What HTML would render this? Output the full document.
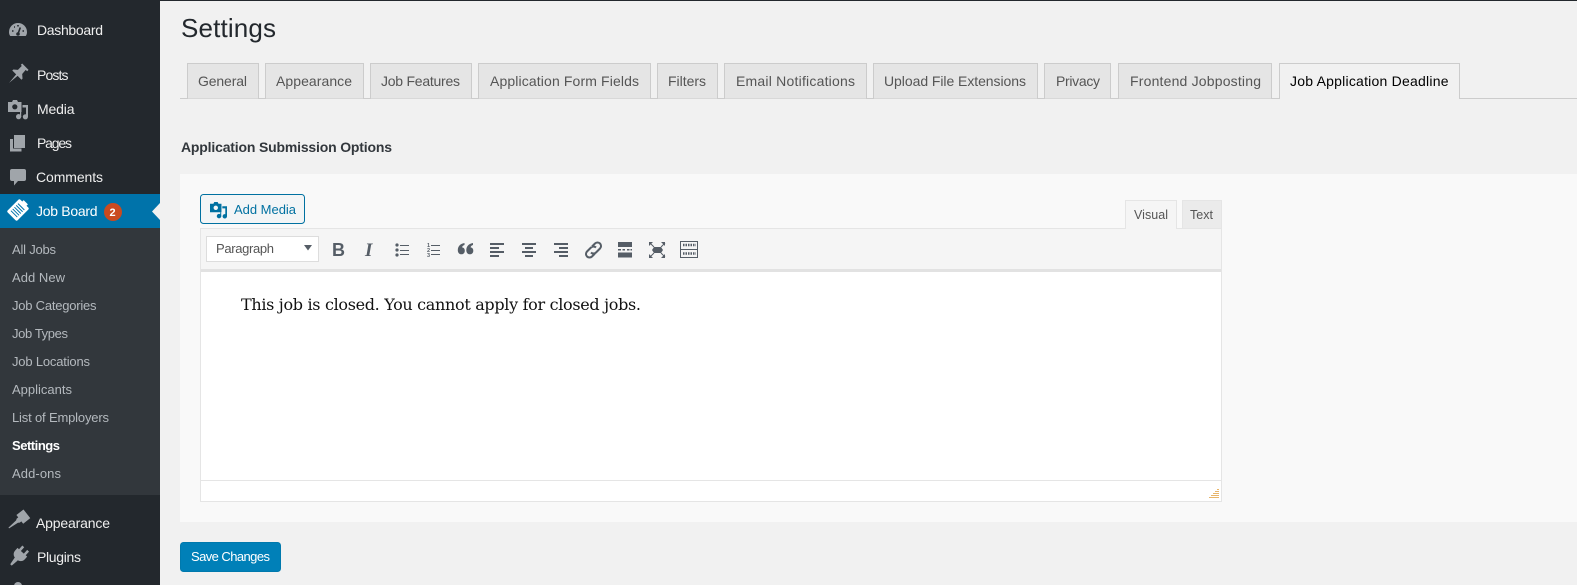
<!DOCTYPE html>
<html><head><meta charset="utf-8"><title>Settings</title>
<style>
html,body{margin:0;padding:0;background:#f1f1f1;overflow:hidden}
svg{display:block}
text{font-family:"Liberation Sans",Arial,sans-serif;font-size:13px}
.m{fill:#eee;font-size:14px}
.s{fill:#b4b9be}
.i{fill:#a0a5aa}
.t{fill:#555;font-size:14px;font-weight:400}
.b{fill:#555d66}
.l{stroke:#555d66;stroke-width:2;fill:none}
.l1{stroke:#555d66;stroke-width:1;fill:none}
</style></head><body>
<svg width="1577" height="585" viewBox="0 0 1577 585" xmlns="http://www.w3.org/2000/svg">
<defs>
<g id="media"><path d="M0 2h4l1-2h4l1 2h3.500v10H0z"/><circle cx="6.800" cy="6.800" r="2.600" fill="var(--c)"/><path d="M14.500 5H20v12h-2V7.500h-3.500zM12 12h1.200v5H12z"/><circle cx="17.400" cy="16.800" r="2.600"/><circle cx="10.600" cy="16.600" r="2.600"/></g>
</defs>
<rect width="1577" height="585" fill="#f1f1f1"/>
<rect width="1577" height="1" fill="#23282d"/>
<!-- sidebar -->
<rect width="160" height="585" fill="#23282d"/>
<rect y="228" width="160" height="267" fill="#32373c"/>
<rect y="194" width="160" height="34" fill="#0073aa"/>
<path d="M160 203l-8 8.500 8 8.500z" fill="#f1f1f1"/>
<!-- sidebar icons -->
<path class="i" d="M18 23a9 9 0 0 0-9 9c0 1.800.5 3.200 1.300 4h15.400c.8-.8 1.300-2.200 1.300-4a9 9 0 0 0-9-9z"/>
<path d="M18 34l2.300-6.500M12 31h1.500M14 27h1M18 25v1.500M22.500 31h1.500" stroke="#23282d" stroke-width="1.600" fill="none"/>
<circle cx="18" cy="34" r="1.800" fill="#23282d"/>
<g transform="translate(19 73) rotate(45)"><path class="i" d="M-4.500-9h9v2H2.500l.5 5.500 3.500 3V3h-13V1.500l3.500-3L-3-7h-1.500zM-1 3h2L0 14z"/></g>
<g class="i" transform="translate(8 100)" style="--c:#23282d"><use href="#media"/></g>
<path class="i" d="M10 139h3v9.500h8.500v3H10zM14 135h11v13H14z"/>
<path class="i" d="M12 169h12a2 2 0 0 1 2 2v8a2 2 0 0 1-2 2h-6l-4 4.500V181h-2a2 2 0 0 1-2-2v-8a2 2 0 0 1 2-2z"/>
<g transform="translate(18 210) rotate(45)"><rect x="-7" y="-9" width="14" height="18" rx="1.500" fill="#fff"/><rect x="-3" y="-11" width="6" height="3" fill="#fff"/><path d="M-4.500-4.500h9M-4.500-2h9M-4.500.5h9M-4.500 3h9M-4.500 5.500h9" stroke="#0073aa" stroke-width="1"/></g>
<circle cx="113" cy="212" r="9" fill="#ca4a1f"/>
<text x="109.500" y="216" fill="#fff" style="font-size:11px;font-weight:700">2</text>
<g transform="translate(19 520) rotate(52)"><path class="i" d="M-5.500-10h11v9h-3v2l-1 1.500L.5 13h-1L-1.500 2.500l-1-1.500v-2h-3zM-5.500-.500z"/></g>
<g transform="translate(19 556) rotate(42)"><path class="i" d="M-4.500-10h2.500v5h4v-5h2.500v5h2v3.500c0 3-2 5-4.500 5.500V5l-1 7h-2l-1-7V4c-2.500-.5-4.500-2.500-4.500-5.500V-5h2z"/></g>
<circle cx="18" cy="586" r="4" class="i"/>
<!-- sidebar labels -->
<text class="m" x="37" y="35" textLength="66">Dashboard</text>
<text class="m" x="37" y="80" textLength="31.500">Posts</text>
<text class="m" x="37" y="114" textLength="37.500">Media</text>
<text class="m" x="37" y="148" textLength="35">Pages</text>
<text class="m" x="36" y="182" textLength="67">Comments</text>
<text x="36" y="216" textLength="61.500" fill="#fff" style="font-size:14px">Job Board</text>
<text class="m" x="36" y="528" textLength="74">Appearance</text>
<text class="m" x="37" y="562" textLength="44">Plugins</text>
<text class="s" x="12" y="254" textLength="44">All Jobs</text>
<text class="s" x="12" y="282" textLength="53">Add New</text>
<text class="s" x="12" y="310" textLength="84.500">Job Categories</text>
<text class="s" x="12" y="338" textLength="56">Job Types</text>
<text class="s" x="12" y="366" textLength="78">Job Locations</text>
<text class="s" x="12" y="394" textLength="60">Applicants</text>
<text class="s" x="12" y="422" textLength="97">List of Employers</text>
<text x="12" y="450" textLength="48" fill="#fff" style="font-weight:700">Settings</text>
<text class="s" x="12" y="478" textLength="49">Add-ons</text>
<!-- heading -->
<text x="181" y="37" textLength="95" fill="#23282d" style="font-size:26px">Settings</text>
<!-- tabs -->
<rect x="180" y="98" width="1397" height="1" fill="#ccc"/>
<g fill="#e5e5e5" stroke="#ccc">
<path d="M187.500 98.500v-35h71v35"/><path d="M265.500 98.500v-35h98v35"/><path d="M370.500 98.500v-35h101v35"/><path d="M478.500 98.500v-35h172v35"/><path d="M657.500 98.500v-35h60v35"/><path d="M724.500 98.500v-35h142v35"/><path d="M873.500 98.500v-35h164v35"/><path d="M1044.500 98.500v-35h66v35"/><path d="M1118.500 98.500v-35h153v35"/>
</g>
<path d="M1279.500 99v-35.500h180V99" fill="#f1f1f1" stroke="#ccc"/>
<rect x="1280" y="98" width="179" height="1" fill="#f1f1f1"/>
<text class="t" x="198" y="86" textLength="49">General</text>
<text class="t" x="276" y="86" textLength="76">Appearance</text>
<text class="t" x="381" y="86" textLength="79">Job Features</text>
<text class="t" x="490" y="86" textLength="149">Application Form Fields</text>
<text class="t" x="668" y="86" textLength="38">Filters</text>
<text class="t" x="736" y="86" textLength="119">Email Notifications</text>
<text class="t" x="884" y="86" textLength="142">Upload File Extensions</text>
<text class="t" x="1056" y="86" textLength="44">Privacy</text>
<text class="t" x="1130" y="86" textLength="131">Frontend Jobposting</text>
<text x="1290" y="86" textLength="158.500" fill="#000" style="font-size:14px">Job Application Deadline</text>
<text x="181" y="152" textLength="211" fill="#32373c" style="font-size:14px;font-weight:700">Application Submission Options</text>
<!-- panel -->
<rect x="180" y="174" width="1397" height="348" fill="#f9f9f9"/>
<!-- add media -->
<rect x="200.500" y="194.500" width="104" height="29" rx="3" fill="#f3f5f6" stroke="#0071a1"/>
<g fill="#0071a1" transform="translate(210 202) scale(.85)" style="--c:#f3f5f6"><use href="#media"/></g>
<text x="234" y="214" textLength="62" fill="#0071a1">Add Media</text>
<!-- editor tabs -->
<path d="M1125.500 228.500v-28h51v28" fill="#f5f5f5" stroke="#e5e5e5"/>
<path d="M1182.500 228.500v-28h39v28" fill="#ebebeb" stroke="#e5e5e5"/>
<text x="1134" y="219" textLength="34" fill="#555" style="font-size:12.500px">Visual</text>
<text x="1190" y="219" textLength="23" fill="#555" style="font-size:12.500px">Text</text>
<!-- editor -->
<rect x="200.500" y="228.500" width="1021" height="273" fill="#fff" stroke="#e5e5e5"/>
<rect x="201" y="229" width="1020" height="41" fill="#f5f5f5"/>
<rect x="201" y="269" width="1020" height="3" fill="#e2e2e2"/>
<rect x="1126" y="228" width="50" height="1" fill="#f5f5f5"/>
<rect x="201" y="480" width="1020" height="1" fill="#e5e5e5"/>
<!-- toolbar -->
<rect x="206.500" y="236.500" width="112" height="25" fill="#fff" stroke="#ddd"/>
<text x="216" y="253" textLength="58" fill="#555">Paragraph</text>
<path d="M304 245h8l-4 5.500z" fill="#555d66"/>
<text class="b" x="332" y="256" style="font-size:18px;font-weight:700">B</text>
<text class="b" x="365" y="256" style="font-family:'Liberation Serif',serif;font-size:19px;font-weight:700;font-style:italic">I</text>
<g class="b"><circle cx="397" cy="245" r="1.600"/><circle cx="397" cy="250" r="1.600"/><circle cx="397" cy="255" r="1.600"/></g>
<path class="l1" d="M400 245.500h9M400 250.500h9M400 254.500h9"/>
<text x="427" y="247" class="b" style="font-size:5.500px;font-weight:700">1</text><text x="427" y="252" class="b" style="font-size:5.500px;font-weight:700">2</text><text x="427" y="257" class="b" style="font-size:5.500px;font-weight:700">3</text>
<path class="l1" d="M431 245.500h9M431 250.500h9M431 254.500h9"/>
<path class="b" d="M464.500 243v2c-1.800.5-2.300 1.500-2.300 2.500 1.500 0 2.600 1.300 2.600 3.200 0 2.200-1.500 3.600-3.400 3.600-2.300 0-3.600-1.800-3.600-4.200 0-3.700 2.500-6.500 6.700-7.100zM473 243v2c-1.800.5-2.300 1.500-2.300 2.500 1.500 0 2.600 1.300 2.600 3.200 0 2.200-1.500 3.600-3.400 3.600-2.300 0-3.600-1.800-3.600-4.200 0-3.700 2.500-6.500 6.700-7.100z"/>
<path class="l" d="M490 244h14M490 248h9M490 252h14M490 256h9" stroke-width="1.600"/>
<path class="l" d="M522 244h14M525 248h8M522 252h14M525 256h8" stroke-width="1.600"/>
<path class="l" d="M554 244h14M559 248h9M554 252h14M559 256h9" stroke-width="1.600"/>
<path class="l" d="M592 246.500l3-3a3.500 3.500 0 0 1 5 5l-4 4a3.500 3.500 0 0 1-5 0M595 253.500l-3 3a3.500 3.500 0 0 1-5-5l4-4a3.500 3.500 0 0 1 5 0"/>
<path class="b" d="M618 242h14v5h-14zM618 252.500h14v5h-14zM618 249h3v1.500h-3zM622.500 249h2.500v1.500h-2.500zM627 249h2.500v1.500H627zM630.500 249h1.500v1.500h-1.500z"/>
<path class="b" d="M654 247h7l2 3-2 3h-7l-2-3zM649 242h4l-4 4zM665 242v4l-4-4zM649 258v-4l4 4zM665 258h-4l4-4z"/>
<path class="l1" d="M650 243l4 4M665 243l-4 4M650 257l4-4M665 257l-4-4"/>
<rect x="680.500" y="241.500" width="17" height="16" fill="none" stroke="#555d66"/>
<path d="M681 249.500h17" stroke="#555d66" stroke-width="1"/>
<path d="M683 245h13M683 253.500h13" stroke="#555d66" stroke-width="2.500" stroke-dasharray="1.500 1"/>
<!-- content -->
<text x="241" y="310" textLength="400" fill="#111" style="font-family:'DejaVu Serif','Liberation Serif',serif;font-size:16px">This job is closed. You cannot apply for closed jobs.</text>
<!-- grip -->
<g fill="#e8b56a"><rect x="1217" y="489" width="2" height="1"/><rect x="1215" y="491" width="4" height="1"/><rect x="1213" y="493" width="6" height="1"/><rect x="1211" y="495" width="8" height="1"/><rect x="1209" y="497" width="10" height="1"/></g>
<!-- save -->
<rect x="180.500" y="542.500" width="100" height="29" rx="3" fill="#0080b8" stroke="#0079ad"/>
<text x="191" y="561" textLength="79" fill="#fff">Save Changes</text>
</svg>
</body></html>
